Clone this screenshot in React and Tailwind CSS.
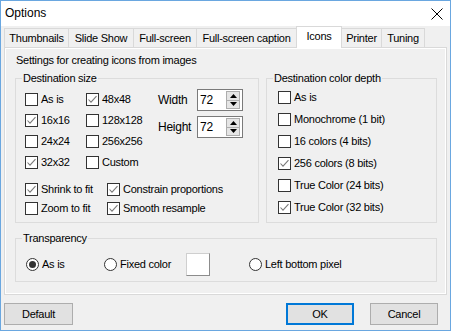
const tabs = [
  { label: "Thumbnails", w: "w-[65px]" },
  { label: "Slide Show", w: "w-[66px]" },
  { label: "Full-screen", w: "w-[64px]" },
  { label: "Full-screen caption", w: "w-[101px]" },
  { label: "Icons", w: "w-[46px]", active: true },
  { label: "Printer", w: "w-[41px]" },
  { label: "Tuning", w: "w-[44px]" },
];

function Check({ checked, label, className = "" }) {
  return (
    <div className={`flex items-center ${className}`}>
      <span className="w-[13px] h-[13px] border border-[#333] bg-white flex items-center justify-center shrink-0">
        {checked && (
          <svg width="11" height="11" viewBox="0 0 11 11">
            <path d="M1.5 5.5 L4 8.2 L9.5 2.2" fill="none" stroke="#7a7a7a" strokeWidth="1.1" />
          </svg>
        )}
      </span>
      <span className="ml-[3px] whitespace-nowrap">{label}</span>
    </div>
  );
}

function Radio({ checked, label, className = "" }) {
  return (
    <div className={`flex items-center ${className}`}>
      <span className="w-[13px] h-[13px] rounded-full border border-[#333] bg-white flex items-center justify-center shrink-0">
        {checked && <span className="w-[7px] h-[7px] rounded-full bg-[#333]" />}
      </span>
      <span className="ml-[3px] whitespace-nowrap">{label}</span>
    </div>
  );
}

function Spin({ value }) {
  return (
    <div className="w-[46px] h-[22px] border border-[#7a7a7a] bg-white flex items-center">
      <span className="flex-1 pl-[2px] text-[12px] tracking-[-0.25px]">{value}</span>
      <div className="w-[14px] h-[18px] mr-[2px] border border-[#adadad] bg-[#e5e5e5] flex flex-col">
        <div className="flex-1 flex items-center justify-center border-b border-[#adadad]">
          <svg width="7" height="4" viewBox="0 0 7 4"><path d="M0 4 L3.5 0 L7 4 Z" fill="#000" /></svg>
        </div>
        <div className="flex-1 flex items-center justify-center">
          <svg width="7" height="4" viewBox="0 0 7 4"><path d="M0 0 L3.5 4 L7 0 Z" fill="#000" /></svg>
        </div>
      </div>
    </div>
  );
}

function Group({ title, className = "", children }) {
  return (
    <fieldset className={`border border-[#dcdcdc] min-w-0 ${className}`}>
      <legend className="ml-[6px] px-px leading-[13px]">{title}</legend>
      {children}
    </fieldset>
  );
}

export default function App() {
  return (
    <div className="w-[451px] h-[331px] border border-[#6aa7e0] bg-[#f0f0f0] flex flex-col text-[11px] leading-[13px] tracking-[-0.25px] text-black font-['Liberation_Sans',Arial,sans-serif] overflow-hidden">
      {/* Title bar */}
      <div className="h-[25px] bg-white flex items-center justify-between pl-[4px] pr-[7px] shrink-0">
        <span className="text-[12px] tracking-normal">Options</span>
        <svg width="12" height="12" viewBox="0 0 12 12">
          <path d="M0.5 0.5 L11.5 11.5 M11.5 0.5 L0.5 11.5" stroke="#000" strokeWidth="1" />
        </svg>
      </div>

      {/* Tabs */}
      <div className="h-[21px] flex items-end pl-[3px] shrink-0">
        {tabs.map((t, i) => (
          <div
            key={t.label}
            className={`${t.w} ${i > 0 ? "-ml-px" : ""} flex justify-center border-l border-t border-r border-[#d9d9d9] whitespace-nowrap ${
              t.active
                ? "h-[22px] -mb-px bg-white relative z-10 items-start pt-[3px]"
                : "h-[19px] bg-[#f0f0f0] items-center"
            }`}
          >
            {t.label}
          </div>
        ))}
      </div>

      {/* Panel */}
      <div className="ml-[3px] w-[443px] h-[248px] border border-[#d9d9d9] bg-white p-px shrink-0">
        <div className="h-full bg-[#f0f0f0] flex flex-col">
          <div className="pl-[10px] pt-[5px]">Settings for creating icons from images</div>

          <div className="flex ml-[9px] mt-[5px]">
            <Group title="Destination size" className="w-[244px] h-[151px]">
              <div className="pl-[9px] pt-[4px]">
                <div className="flex">
                  <div className="grid grid-cols-[61px_72px] auto-rows-[21px]">
                    <Check label="As is" />
                    <Check label="48x48" checked />
                    <Check label="16x16" checked />
                    <Check label="128x128" />
                    <Check label="24x24" />
                    <Check label="256x256" />
                    <Check label="32x32" checked />
                    <Check label="Custom" />
                  </div>
                  <div className="flex flex-col gap-[5px]">
                    <div className="flex items-center">
                      <span className="w-[39px] text-[12px] tracking-[-0.25px]">Width</span>
                      <Spin value="72" />
                    </div>
                    <div className="flex items-center">
                      <span className="w-[39px] text-[12px] tracking-[-0.25px]">Height</span>
                      <Spin value="72" />
                    </div>
                  </div>
                </div>
                <div className="grid grid-cols-[82px_1fr] auto-rows-[19px] mt-[7px]">
                  <Check label="Shrink to fit" checked />
                  <Check label="Constrain proportions" checked />
                  <Check label="Zoom to fit" />
                  <Check label="Smooth resample" checked />
                </div>
              </div>
            </Group>

            <Group title="Destination color depth" className="ml-[7px] w-[171px] h-[151px]">
              <div className="pl-[11px] pt-px flex flex-col">
                <Check label="As is" className="h-[22px]" />
                <Check label="Monochrome (1 bit)" className="h-[22px]" />
                <Check label="16 colors (4 bits)" className="h-[22px]" />
                <Check label="256 colors (8 bits)" checked className="h-[22px]" />
                <Check label="True Color (24 bits)" className="h-[22px]" />
                <Check label="True Color (32 bits)" checked className="h-[22px]" />
              </div>
            </Group>
          </div>

          <Group title="Transparency" className="ml-[9px] mt-[9px] w-[422px] h-[50px]">
            <div className="pl-[10px] pt-[8px] flex items-center h-[30px]">
              <Radio label="As is" checked className="w-[78px]" />
              <Radio label="Fixed color" className="w-[82px]" />
              <div className="w-[24px] h-[23px] bg-white border border-[#cfcfcf] border-r-[#8c8c8c] border-b-[#8c8c8c]" />
              <Radio label="Left bottom pixel" className="ml-[39px]" />
            </div>
          </Group>
        </div>
      </div>

      {/* Buttons */}
      <div className="flex mt-[8px] pl-[3px] pr-[12px]">
        <button className="w-[69px] h-[22px] bg-[#e1e1e1] border border-[#adadad]">Default</button>
        <button className="ml-auto w-[68px] h-[22px] bg-[#e1e1e1] border-2 border-[#0078d7]">OK</button>
        <button className="ml-[16px] w-[68px] h-[22px] bg-[#e1e1e1] border border-[#adadad]">Cancel</button>
      </div>
    </div>
  );
}
